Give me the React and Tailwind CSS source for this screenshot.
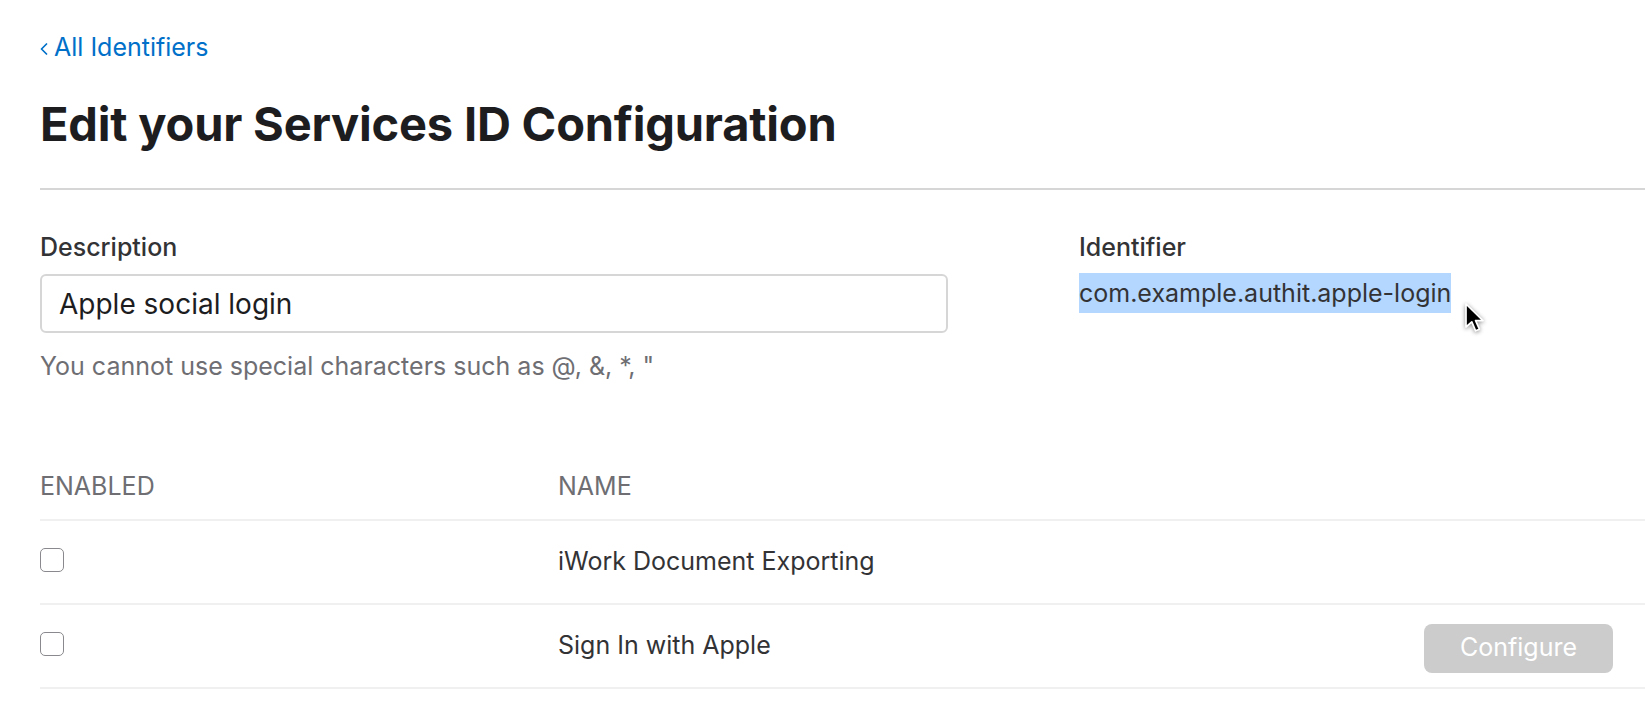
const rows = [
    { id: 'iwork', name: 'iWork Document Exporting', configurable: false },
    { id: 'siwa', name: 'Sign In with Apple', configurable: true },
];

function Cursor() {
    return (
        <svg className="absolute left-[1464px] top-[302px] drop-shadow-[0_1px_2px_rgba(0,0,0,0.45)]" width="22" height="32" viewBox="0 0 22 32">
            <path d="M2 2 L2 25 L7.8 19.8 L11.6 28.8 L15.4 27.2 L11.6 18.6 L19 18.6 Z" fill="#000" stroke="#fff" strokeWidth="1.7" strokeLinejoin="round" />
        </svg>
    );
}

export default function App() {
    return (
        <div className="relative min-h-[708px] w-full overflow-hidden bg-white pl-[40px] text-[#333336]" style={{ fontFamily: 'Inter, "Liberation Sans", sans-serif' }}>
            <div className="pt-[32px]">
                <a className="flex items-center gap-[6px] text-[25px] leading-[30px] text-[#0070c9]">
                    <svg width="8" height="12" viewBox="0 0 8 12" className="mt-[3px]">
                        <polyline points="6.5,1 1.5,6 6.5,11" fill="none" stroke="#0070c9" strokeWidth="1.7" strokeLinecap="round" strokeLinejoin="round" />
                    </svg>
                    <span>All Identifiers</span>
                </a>
            </div>
            <h1 className="mt-[34px] text-[47px] font-bold leading-[56px] tracking-[-0.2px] text-[#1d1d1f]">
                Edit your Services ID Configuration
            </h1>
            <div className="mt-[36px] h-[2px] bg-[#d6d6d6]" />

            <div className="mt-[42px] flex">
                <div className="w-[908px]">
                    <label className="block text-[25px] font-medium leading-[30px] text-[#333336]">Description</label>
                    <div className="mt-[12px] flex h-[59px] items-center rounded-[6px] border-2 border-[#d6d6d6] px-[17px] text-[28px] text-[#1d1d1f]">
                        Apple social login
                    </div>
                    <p className="mt-[18px] text-[25px] leading-[30px] text-[#6e6e73]">You cannot use special characters such as @, &amp;, *, "</p>
                </div>
                <div className="ml-[131px]">
                    <label className="block text-[25px] font-medium leading-[30px] text-[#333336]">Identifier</label>
                    <div className="mt-[11px] inline-block bg-[#b3d7ff] text-[25px] leading-[40px] text-[#333336]">com.example.authit.apple-login</div>
                </div>
            </div>

            <div className="mt-[74px]">
                <div className="flex h-[64px] items-center text-[25px] uppercase text-[#6e6e73]">
                    <div className="w-[518px]">Enabled</div>
                    <div>Name</div>
                </div>
                {rows.map((row) => (
                    <div key={row.id} className="flex h-[84px] items-center border-t-2 border-[#f0f0f0] text-[25px]">
                        <div className="w-[518px]">
                            <div className="-mt-[5px] h-[24px] w-[24px] rounded-[5px] border-[1.5px] border-[#8a8a8e] bg-white" />
                        </div>
                        <div className="flex-1 text-[#333336]">{row.name}</div>
                        {row.configurable && (
                            <button className="mr-[32px] mt-[4px] h-[49px] w-[189px] rounded-[8px] bg-[#cccccc] text-[25px] text-white">Configure</button>
                        )}
                    </div>
                ))}
                <div className="h-[2px] bg-[#f0f0f0]" />
            </div>
            <Cursor />
        </div>
    );
}
